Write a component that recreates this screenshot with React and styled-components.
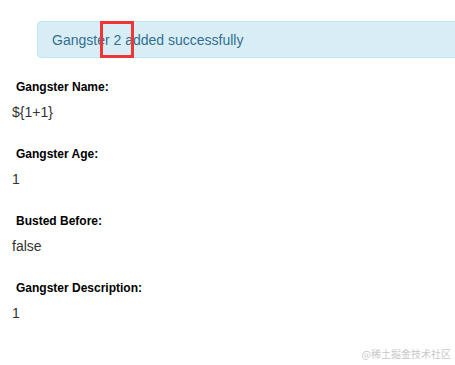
import React from 'react'
import styled, { createGlobalStyle } from 'styled-components'

const GlobalStyle = createGlobalStyle`
  html, body {
    margin: 0;
    padding: 0;
    background: #fff;
    font-family: "Liberation Sans", Arial, sans-serif;
    color: #333;
  }
`

const Page = styled.div`
  position: relative;
  width: 455px;
  height: 365px;
  overflow: hidden;
  padding: 21px 0 0 12px;
  box-sizing: border-box;
`

const Alert = styled.div`
  position: relative;
  margin-left: 25px;
  margin-right: -20px;
  height: 37px;
  box-sizing: border-box;
  padding: 0 14px;
  display: flex;
  align-items: center;
  background: #d9edf7;
  border: 1px solid #bce8f1;
  border-radius: 4px;
  color: #31708f;
  font-size: 14px;
`

const Highlight = styled.div`
  position: absolute;
  left: 62px;
  top: -1px;
  width: 34px;
  height: 37px;
  border: 3px solid #f03535;
  box-sizing: border-box;
`

const Details = styled.div`
  margin-top: 22px;
  display: flex;
  flex-direction: column;
`

const Field = styled.div`
  display: flex;
  flex-direction: column;
  height: 67px;
`

const Label = styled.div`
  padding-left: 4px;
  font-size: 12px;
  font-weight: 700;
  color: #000;
  line-height: 14px;
`

const Value = styled.div`
  margin-top: 10px;
  font-size: 14px;
  line-height: 16px;
  color: #333;
`

const Watermark = styled.div`
  position: absolute;
  right: 4px;
  bottom: 4px;
  font-size: 10px;
  color: #c8c8c8;
  font-family: "Noto Sans CJK SC", sans-serif;
`

const fields = [
  { label: 'Gangster Name:', value: '${1+1}' },
  { label: 'Gangster Age:', value: '1' },
  { label: 'Busted Before:', value: 'false' },
  { label: 'Gangster Description:', value: '1' },
]

const App = () => {
  return <Page>
    <GlobalStyle />
    <Alert>
      Gangster 2 added successfully
      <Highlight />
    </Alert>
    <Details>
      {fields.map((f, i) => (
        <Field key={i}>
          <Label>{f.label}</Label>
          <Value>{f.value}</Value>
        </Field>
      ))}
    </Details>
    <Watermark>@稀土掘金技术社区</Watermark>
  </Page>
}

export default App
